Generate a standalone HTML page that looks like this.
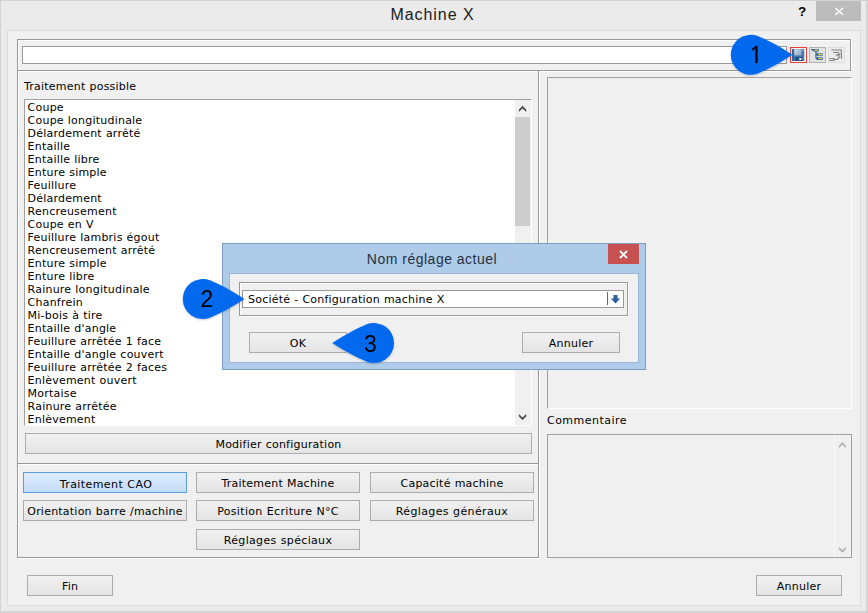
<!DOCTYPE html>
<html lang="fr">
<head>
<meta charset="utf-8">
<title>Machine X</title>
<style>
html,body{margin:0;padding:0;}
body{width:868px;height:613px;position:relative;overflow:hidden;background:#ebebeb;
  font-family:"DejaVu Sans","Liberation Sans",sans-serif;font-size:11px;color:#000;
  letter-spacing:0.22px;word-spacing:0.3px;}
.abs{position:absolute;box-sizing:border-box;}
#frame{left:0;top:0;width:868px;height:613px;border:solid #d3d3d3;border-width:1px 2px 2px 1px;}
#client{left:7px;top:30px;width:854px;height:576px;background:#f0f0f0;border:1px solid #dcdcdc;}
#title{left:0;top:4px;width:865px;text-align:center;font-family:"Liberation Sans",sans-serif;
  font-size:16px;letter-spacing:0.95px;word-spacing:0;color:#1a1a1a;line-height:22px;}
#help{left:796px;top:2px;width:12px;text-align:center;font-family:"Liberation Sans",sans-serif;font-weight:bold;
  font-size:13.5px;line-height:20px;letter-spacing:0;color:#000;}
#close{left:816px;top:1px;width:45px;height:20px;background:#bcbcbc;}
.gw{border:1px solid #fff;}
.gg{border:1px solid #989898;}
.btn{border:1px solid #acacac;background:linear-gradient(#f1f1f1,#e4e4e4);text-align:center;
  height:21px;line-height:20px;white-space:nowrap;padding-top:1px;}
.btn.sel{border-color:#5a9fe6;background:linear-gradient(#deecfc,#c4ddfa);}
.field{background:#fff;border:1px solid #989898;}
#list{left:24px;top:99px;width:508px;height:327px;background:#fff;border-top:1px solid #a0a0a0;border-left:1px solid #a0a0a0;
  border-right:1px solid #fff;border-bottom:1px solid #fff;}
#list .it{position:absolute;left:2.6px;height:13px;line-height:13px;white-space:nowrap;}
.lbl{white-space:nowrap;line-height:13px;height:13px;}
</style>
</head>
<body>
<div id="frame" class="abs"></div>
<div id="title" class="abs">Machine X</div>
<div id="help" class="abs">?</div>
<div id="close" class="abs">
  <svg class="abs" style="left:18px;top:6px" width="11" height="9" viewBox="0 0 11 9"><path d="M1.4 1 L9 7.8 M9 1 L1.4 7.8" stroke="#fff" stroke-width="1.5" fill="none"/></svg>
</div>
<div id="client" class="abs"></div>

<!-- group boxes (etched) -->
<div class="abs gw" style="left:18px;top:40px;width:834px;height:32px"></div>
<div class="abs gw" style="left:18px;top:71px;width:522px;height:394px"></div>
<div class="abs gw" style="left:18px;top:464px;width:522px;height:95px"></div>
<div class="abs gg" style="left:17px;top:39px;width:834px;height:32px"></div>
<div class="abs gg" style="left:17px;top:70px;width:522px;height:394px"></div>
<div class="abs gg" style="left:17px;top:463px;width:522px;height:95px"></div>

<!-- top input -->
<div class="abs field" style="left:22px;top:46px;width:765px;height:18px"></div>

<!-- toolbar icons -->
<div class="abs" style="left:790px;top:47px;width:17px;height:16px;border:1px solid #ea3e38;background:#f3f3f3"></div>
<svg class="abs" style="left:790px;top:47px" width="17" height="16" viewBox="0 0 17 16">
  <defs><linearGradient id="fl" x1="0" y1="0" x2="1" y2="1"><stop offset="0" stop-color="#d3dfea"/><stop offset="1" stop-color="#86a8c6"/></linearGradient></defs>
  <rect x="2.2" y="2" width="12" height="12" rx="0.6" fill="#4478ae"/>
  <rect x="2.2" y="2" width="1.6" height="12" fill="#2e5f95"/>
  <rect x="4.2" y="2.2" width="7.2" height="6.2" fill="url(#fl)"/>
  <rect x="5.2" y="10" width="7" height="4" fill="#2a5285"/>
  <rect x="9.3" y="11" width="2" height="2" fill="#fff"/>
  <rect x="12.5" y="3" width="1" height="1" fill="#dce6ef"/>
</svg>
<div class="abs" style="left:809px;top:47px;width:17px;height:16px;border:1px solid #b2b2b2;background:#e2e2e2"></div>
<svg class="abs" style="left:810px;top:48px" width="15" height="14" viewBox="0 0 15 14">
  <path d="M1.3 1.3 L3.6 2.5 M6 3 V10.6 M6 6.5 H7.5 M6 10.6 H7.5" stroke="#1d5796" stroke-width="1.15" fill="none"/>
  <rect x="3.3" y="1" width="5.6" height="2.6" rx="0.5" fill="#1d5796"/>
  <rect x="4.5" y="1.6" width="3.8" height="1.3" fill="#ffd83e"/>
  <rect x="6.9" y="5.2" width="5.7" height="2.6" rx="0.5" fill="#1d5796"/>
  <rect x="8.2" y="5.8" width="3.8" height="1.3" fill="#ffd83e"/>
  <rect x="6.9" y="9.3" width="5.7" height="2.6" rx="0.5" fill="#1d5796"/>
  <rect x="8.2" y="9.9" width="3.8" height="1.3" fill="#ffd83e"/>
</svg>
<div class="abs" style="left:828px;top:47px;width:17px;height:16px;border:1px solid #dcdcdc;background:#ececec"></div>
<svg class="abs" style="left:829px;top:48px" width="15" height="14" viewBox="0 0 15 14">
  <path d="M2.4 2 H12.4 V11 M4.2 4.5 H10.1 M6.5 7 H9 M0.2 10.5 H5 V12.5 H0.2 M5 11.5 H8.2 L10.6 9" stroke="#7f7f7f" stroke-width="1.1" fill="none"/>
  <path d="M8.8 5.6 L11.2 8.4 M11.2 5.6 L8.8 8.4" stroke="#777" stroke-width="1.2" fill="none"/>
</svg>

<!-- left panel -->
<div class="abs lbl" style="left:24px;top:80px">Traitement possible</div>
<div id="list" class="abs">
  <div class="it" style="top:1px">Coupe</div>
  <div class="it" style="top:14px">Coupe longitudinale</div>
  <div class="it" style="top:27px">Délardement arrêté</div>
  <div class="it" style="top:40px">Entaille</div>
  <div class="it" style="top:53px">Entaille libre</div>
  <div class="it" style="top:66px">Enture simple</div>
  <div class="it" style="top:79px">Feuillure</div>
  <div class="it" style="top:92px">Délardement</div>
  <div class="it" style="top:105px">Rencreusement</div>
  <div class="it" style="top:118px">Coupe en V</div>
  <div class="it" style="top:131px">Feuillure lambris égout</div>
  <div class="it" style="top:144px">Rencreusement arrêté</div>
  <div class="it" style="top:157px">Enture simple</div>
  <div class="it" style="top:170px">Enture libre</div>
  <div class="it" style="top:183px">Rainure longitudinale</div>
  <div class="it" style="top:196px">Chanfrein</div>
  <div class="it" style="top:209px">Mi-bois à tire</div>
  <div class="it" style="top:222px">Entaille d'angle</div>
  <div class="it" style="top:235px">Feuillure arrêtée 1 face</div>
  <div class="it" style="top:248px">Entaille d'angle couvert</div>
  <div class="it" style="top:261px">Feuillure arrêtée 2 faces</div>
  <div class="it" style="top:274px">Enlèvement ouvert</div>
  <div class="it" style="top:287px">Mortaise</div>
  <div class="it" style="top:300px">Rainure arrêtée</div>
  <div class="it" style="top:313px">Enlèvement</div>
  <!-- scrollbar -->
  <div class="abs" style="left:490px;top:0;width:16px;height:325px;background:#f0f0f0"></div>
  <div class="abs" style="left:490px;top:17px;width:15px;height:109px;background:#cdcdcd"></div>
</div>
<div class="abs btn" style="left:25px;top:433px;width:507px">Modifier configuration</div>

<div class="abs btn sel" style="left:23px;top:472px;width:164px;padding-top:2px;padding-left:2px;letter-spacing:0.42px">Traitement CAO</div>
<div class="abs btn" style="left:196px;top:472px;width:164px">Traitement Machine</div>
<div class="abs btn" style="left:370px;top:472px;width:164px">Capacité machine</div>
<div class="abs btn" style="left:23px;top:500px;width:164px">Orientation barre /machine</div>
<div class="abs btn" style="left:196px;top:500px;width:164px;letter-spacing:0.33px">Position Ecriture N°C</div>
<div class="abs btn" style="left:370px;top:500px;width:164px;letter-spacing:0.37px">Réglages généraux</div>
<div class="abs btn" style="left:196px;top:529px;width:164px;letter-spacing:0.34px">Réglages spéciaux</div>

<!-- right panel -->
<div class="abs" style="left:547px;top:77px;width:305px;height:332px;border-top:1px solid #a0a0a0;border-left:1px solid #a0a0a0;border-right:1px solid #fff;border-bottom:1px solid #fff;"></div>
<div class="abs lbl" style="left:547px;top:414px;letter-spacing:0.47px">Commentaire</div>
<div class="abs" style="left:547px;top:434px;width:305px;height:124px;border:1px solid #a0a0a0;">
  <div class="abs" style="left:286px;top:0;width:1px;height:122px;background:#fafafa"></div>
</div>

<div class="abs btn" style="left:27px;top:575px;width:86px">Fin</div>
<div class="abs btn" style="left:756px;top:575px;width:86px">Annuler</div>

<!-- scrollbar arrows -->
<svg class="abs" style="left:0;top:0" width="868" height="613" viewBox="0 0 868 613">
  <path transform="translate(518.9 105.8)" d="M3.65 0 L7.3 3.7 V6.2 L3.65 2.6 L0 6.2 V3.7 Z" fill="#4d4d4d"/>
  <path transform="translate(518.9 413.9)" d="M3.65 6.2 L7.3 2.5 V0 L3.65 3.6 L0 0 V2.5 Z" fill="#4d4d4d"/>
  <path transform="translate(839 442.2) scale(0.93)" d="M3.65 0 L7.3 3.7 V6.2 L3.65 2.6 L0 6.2 V3.7 Z" fill="#adadad"/>
  <path transform="translate(839 547) scale(0.93)" d="M3.65 6.2 L7.3 2.5 V0 L3.65 3.6 L0 0 V2.5 Z" fill="#adadad"/>
</svg>

<!-- popup dialog -->
<div class="abs" style="left:222px;top:243px;width:424px;height:127px;background:#aecbe9;border:1px solid #7e9fc3"></div>
<div class="abs" style="left:229px;top:273px;width:410px;height:90px;background:#f0f0f0;border:1px solid #9bb6d6"></div>
<div class="abs" style="left:222px;top:249px;width:420px;text-align:center;font-family:'Liberation Sans',sans-serif;font-size:14px;letter-spacing:0.5px;word-spacing:0;line-height:20px;color:#25303f">Nom réglage actuel</div>
<div class="abs" style="left:608px;top:244px;width:31px;height:20px;background:#c75050">
  <svg class="abs" style="left:11px;top:6px" width="9" height="9" viewBox="0 0 9 9"><path d="M1 1 L8 8 M8 1 L1 8" stroke="#fff" stroke-width="1.8" fill="none"/></svg>
</div>
<div class="abs gw" style="left:240px;top:283px;width:389px;height:34px"></div>
<div class="abs gg" style="left:239px;top:282px;width:389px;height:34px"></div>
<div class="abs field" style="left:242px;top:290px;width:382px;height:18px">
  <div class="abs lbl" style="left:5px;top:2px">Société - Configuration machine X</div>
  <div class="abs" style="left:364px;top:1px;width:1px;height:13px;background:#6a6a6a"></div>
  <svg class="abs" style="left:367px;top:4px" width="11" height="9" viewBox="0 0 11 9"><path d="M3.5 0 H7.5 V3.5 H10.2 L5.5 8.6 L0.8 3.5 H3.5 Z" fill="#2b5f9e"/></svg>
</div>
<div class="abs btn" style="left:249px;top:332px;width:98px">OK</div>
<div class="abs btn" style="left:522px;top:332px;width:98px">Annuler</div>

<!-- callouts -->
<svg class="abs" style="left:0;top:0;pointer-events:none" width="868" height="613" viewBox="0 0 868 613">
  <defs>
    <filter id="sh" x="-20%" y="-20%" width="140%" height="150%"><feGaussianBlur in="SourceAlpha" stdDeviation="1.3"/><feOffset dx="0" dy="1"/><feComponentTransfer><feFuncA type="linear" slope="0.22"/></feComponentTransfer><feMerge><feMergeNode/><feMergeNode in="SourceGraphic"/></feMerge></filter>
  </defs>
  <g filter="url(#sh)" fill="#0069ee">
    <path transform="translate(750.8 54.8)" d="M41.7 0 Q22 -12.8 7 -18.73 A20 20 0 1 0 7 18.73 Q22 12.8 41.7 0 Z"/>
    <path transform="translate(202.8 299)" d="M41.7 0 Q22 -12.8 7 -18.73 A20 20 0 1 0 7 18.73 Q22 12.8 41.7 0 Z"/>
    <path transform="translate(374 343) scale(-1 1)" d="M41.7 0 Q22 -12.8 7 -18.73 A20 20 0 1 0 7 18.73 Q22 12.8 41.7 0 Z"/>
  </g>
  <g font-family="Liberation Sans, sans-serif" font-size="23" fill="#000" text-anchor="middle" letter-spacing="0">
    <text x="755.8" y="63.2" font-family="NanumGothic, Liberation Sans, sans-serif" stroke="#000" stroke-width="0.45">1</text>
    <text x="206.8" y="306.5">2</text>
    <text x="370.3" y="351.5">3</text>
  </g>
</svg>
</body>
</html>
